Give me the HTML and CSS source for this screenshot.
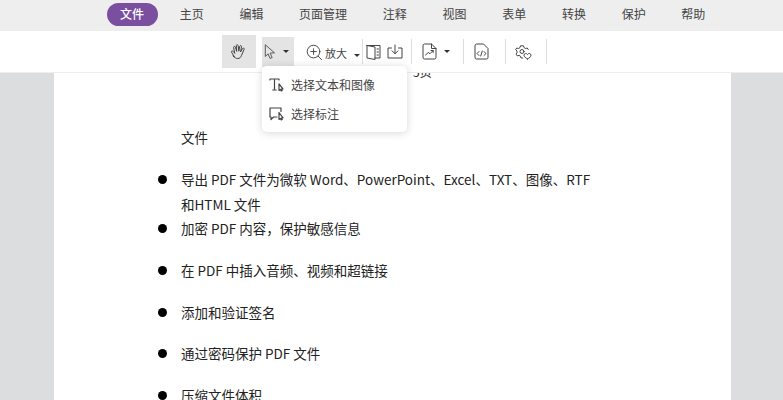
FILE: index.html
```html
<!DOCTYPE html>
<html lang="zh-CN">
  <head>
    <meta charset="UTF-8">
    <title>PDF</title>
    <link rel="stylesheet" href="styles.css">
  </head>
  <body>
    <div class="tabs">
      <span class="tab active">文件</span>
      <span class="tab">主页</span>
      <span class="tab">编辑</span>
      <span class="tab">页面管理</span>
      <span class="tab">注释</span>
      <span class="tab">视图</span>
      <span class="tab">表单</span>
      <span class="tab">转换</span>
      <span class="tab">保护</span>
      <span class="tab">帮助</span>
    </div>

    <div class="toolbar">
      <button class="tool hand">
        <svg width="20" height="20" viewBox="0 0 20 20"><path d="M5.200 14.500 2.600 10.400c-.7-1.200.7-2 1.500-1l1.700 2L4.600 5.600c-.3-1.300 1.400-1.700 1.800-.4l1.300 4.200-.4-5.600c-.1-1.400 1.800-1.400 1.900 0l.6 5.400.9-4.800c.3-1.300 2-1 1.800.3l-.9 5.200 1.900-3.300c.7-1.100 2.100-.3 1.600.8l-2.600 6c-.8 2-1.700 3.100-3.700 3.100-1.900 0-3.200-.9-4.600-2.500Z"/></svg>
      </button>
      <button class="tool pointer">
        <svg width="12" height="16" viewBox="0 0 14 18"><path d="M1.500 1v13.200l3.300-3 2.200 5.300 2.500-1-2.300-5.200 4.600-.3Z"/></svg>
        <i class="caret"></i>
      </button>
      <div class="zoom">
        <svg width="17" height="17" viewBox="0 0 18 18"><circle cx="8" cy="8" r="6.700"/><path d="M8 5v6M5 8h6M13 13l3.600 3.600"/></svg>
        <span>放大</span>
        <i class="caret"></i>
      </div>
      <i class="sep"></i>
      <div class="pair">
        <svg width="15" height="16" viewBox="0 0 15 16"><path d="M1 1.500h13v12.500H9M1 1.500v12.500l8 1.500V3L1 1.500ZM11 5h1.500M11 8h1.500M11 11h1.500"/></svg>
        <svg width="16" height="15" viewBox="0 0 16 15"><path d="M4.500 4H1v10h14V4h-3.500M8 1v8.500M5 6.800l3 3 3-3"/></svg>
      </div>
      <i class="sep"></i>
      <div class="chart">
        <svg width="15" height="17" viewBox="0 0 15 17"><path d="M1 2.500a1.500 1.500 0 0 1 1.500-1.500H9.500L14 5.500v9a1.500 1.500 0 0 1-1.500 1.500h-10A1.500 1.500 0 0 1 1 14.500ZM9.500 1v4.500H14M3.500 12l2.800-2.500 1.700 1.200 3-3M9 7.500h2.200v2"/></svg>
        <i class="caret"></i>
      </div>
      <i class="sep"></i>
      <div class="code">
        <svg width="15" height="17" viewBox="0 0 15 17"><path d="M1 2.500a1.500 1.500 0 0 1 1.500-1.500H9.500L14 5.500v9a1.500 1.500 0 0 1-1.500 1.500h-10A1.500 1.500 0 0 1 1 14.500ZM5 8.500l-2 2 2 2M10 8.500l2 2-2 2M8.300 8l-1.600 5"/></svg>
      </div>
      <i class="sep"></i>
      <div class="gear">
        <svg width="17" height="17" viewBox="0 0 17 17"><path d="M7.500 15H6l-.5-1.800-1.500-.8-1.800.5-1-1.700L2 9.800V8L.7 6.700l1-1.700 1.800.5 1.500-.9L5.500 2.800h3l.5 1.800 1.500.9 1.800-.5.900 1.500"/><circle cx="7" cy="8.500" r="2"/><path d="M12.500 16c-2-1.200-3.500-2.300-3.500-3.800 0-1.900 2.500-2.300 3.500-.7 1-1.600 3.500-1.200 3.500.7 0 1.500-1.500 2.600-3.500 3.800Z"/></svg>
      </div>
      <i class="sep"></i>

      <div class="menu">
        <div class="menu-item">
          <svg width="16" height="15" viewBox="0 0 16 15"><path d="M1 3V2h9v1M5.500 2v11M3.800 13h3.400M10 7v6.500l1.300-1 .9 1.500 1-.5-.8-1.500 1.600-.2Z"/></svg>
          <span>选择文本和图像</span>
        </div>
        <div class="menu-item">
          <svg width="16" height="15" viewBox="0 0 16 15"><path d="M8 11H4.500L2 13.500V11H1V2h11v3.500M10 6.500v7l1.300-1 .9 1.500 1-.5-.8-1.500 1.600-.2Z"/></svg>
          <span>选择标注</span>
        </div>
      </div>
    </div>

    <div class="viewer">
      <div class="page">
        <div class="page-no">5页</div>
        <p class="lead">文件</p>
        <ul class="points">
          <li class="tight">导出 PDF 文件为微软 Word、PowerPoint、Excel、TXT、图像、RTF 和HTML 文件</li>
          <li>加密 PDF 内容，保护敏感信息</li>
          <li>在 PDF 中插入音频、视频和超链接</li>
          <li>添加和验证签名</li>
          <li>通过密码保护 PDF 文件</li>
          <li>压缩文件体积</li>
        </ul>
      </div>
    </div>
  </body>
</html>
```

FILE: styles.css
```css
* {
  margin: 0;
  padding: 0;
  box-sizing: border-box;
}

html,
body {
  height: 100%;
  overflow: hidden;
}

body {
  display: flex;
  flex-direction: column;
  font-family: "Noto Sans CJK SC", "Noto Sans", sans-serif;
  color: #222222;
}

.tabs {
  height: 31px;
  flex: none;
  display: flex;
  align-items: flex-start;
  gap: 9.700px;
  padding: 3px 0 0 107px;
  background: #eeeeee;
}

.tab {
  height: 23px;
  padding: 0 13px;
  border-radius: 12px;
  font-size: 12px;
  line-height: 21px;
  color: #444444;
}

.tab.active {
  margin-right: -1px;
  padding-right: 14px;
  background: #7b4f9f;
  color: #ffffff;
  font-weight: 500;
  line-height: 22px;
}

.toolbar {
  position: relative;
  z-index: 2;
  height: 42px;
  flex: none;
  display: flex;
  align-items: center;
  padding-left: 222px;
  background: #ffffff;
  border-bottom: 1px solid #eeeeee;
}

.toolbar svg {
  display: block;
  fill: none;
  stroke: #444444;
  stroke-width: 1;
  stroke-linecap: round;
  stroke-linejoin: round;
}

.tool {
  display: flex;
  align-items: center;
  border: 0;
  background: #e4e4e4;
}

.hand {
  width: 34px;
  height: 33px;
  justify-content: center;
}

.pointer {
  width: 32px;
  height: 30px;
  margin-left: 6px;
  padding-left: 2px;
}

.caret {
  display: block;
  width: 0;
  height: 0;
  border: 3px solid transparent;
  border-top: 3px solid #333333;
  border-bottom: 0;
}

.pointer .caret {
  margin-left: 7px;
}

.zoom {
  display: flex;
  align-items: center;
  width: 56px;
  margin-left: 12px;
  padding-top: 2px;
  font-size: 11px;
  color: #444444;
}

.zoom span {
  margin-left: 2px;
}

.zoom .caret {
  margin: 6px 0 0 7px;
}

.sep {
  display: block;
  width: 1px;
  height: 25px;
  flex: none;
  background: #dddddd;
}

.pair {
  display: flex;
  align-items: center;
  gap: 6px;
  width: 48px;
  padding-left: 3px;
}

.chart {
  display: flex;
  align-items: center;
  width: 51px;
  padding-left: 10px;
}

.chart .caret {
  margin-left: 7px;
}

.code {
  width: 41px;
  padding-left: 10px;
}

.gear {
  width: 40px;
  padding-left: 9px;
}

.menu {
  position: absolute;
  left: 262px;
  top: 35px;
  width: 145px;
  height: 66px;
  padding-top: 4px;
  background: #ffffff;
  border-radius: 5px;
  box-shadow: 0 1px 8px rgba(0, 0, 0, 0.16);
}

.menu-item {
  height: 29px;
  display: flex;
  align-items: center;
  gap: 6px;
  padding-left: 7px;
  font-size: 12px;
  color: #444444;
}

.menu-item svg {
  stroke-width: 1.200;
}

.viewer {
  flex: 1;
  min-height: 0;
  padding: 0 52px 0 54px;
  background: #dcddde;
}

.page {
  height: 100%;
  overflow: hidden;
  padding-left: 127px;
  background: #ffffff;
  font-size: 13.500px;
}

.page-no {
  height: 20px;
  margin: -11px 0 0 232px;
  font-size: 12px;
  line-height: 20px;
}

.lead {
  margin-top: 43px;
  line-height: 24px;
}

.points {
  width: 416px;
  margin-top: 18px;
  list-style: none;
}

.points li {
  position: relative;
  line-height: 24.500px;
  margin-bottom: 17.250px;
}

.points li.tight {
  margin-bottom: 0;
}

.points li::before {
  content: "";
  position: absolute;
  left: -23.500px;
  top: 8px;
  width: 9px;
  height: 9px;
  border-radius: 50%;
  background: #000000;
}
```
